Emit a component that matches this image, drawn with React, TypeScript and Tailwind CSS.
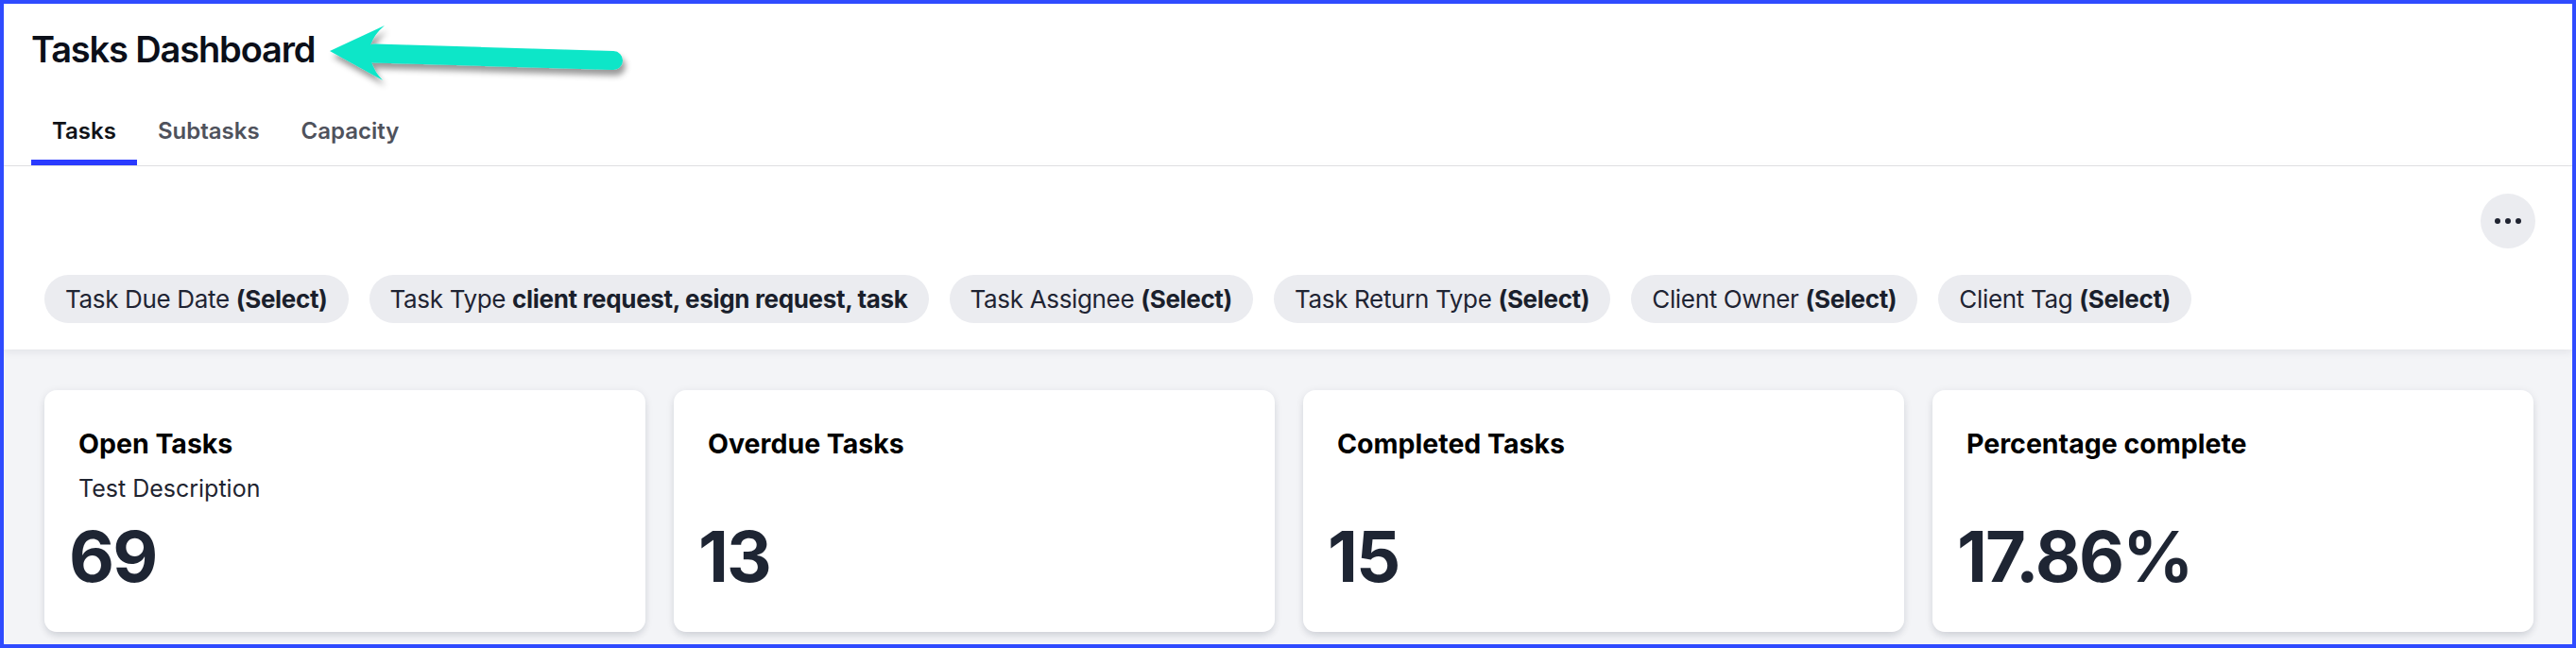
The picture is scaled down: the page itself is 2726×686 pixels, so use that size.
import React from "react";

interface Filter {
  label: string;
  value: string;
}

interface Stat {
  title: string;
  description?: string;
  value: string;
}

const tabs = ["Tasks", "Subtasks", "Capacity"];

const filters: Filter[] = [
  { label: "Task Due Date", value: "(Select)" },
  { label: "Task Type", value: "client request, esign request, task" },
  { label: "Task Assignee", value: "(Select)" },
  { label: "Task Return Type", value: "(Select)" },
  { label: "Client Owner", value: "(Select)" },
  { label: "Client Tag", value: "(Select)" },
];

const stats: Stat[] = [
  { title: "Open Tasks", description: "Test Description", value: "69" },
  { title: "Overdue Tasks", value: "13" },
  { title: "Completed Tasks", value: "15" },
  { title: "Percentage complete", value: "17.86%" },
];

// teal annotation arrow pointing at the page title
const Arrow: React.FC = () => (
  <svg
    className="absolute left-0 top-0 pointer-events-none"
    width="700"
    height="110"
    viewBox="0 0 700 110"
  >
    <defs>
      <filter id="arrowShadow" x="-10%" y="-30%" width="130%" height="180%">
        <feDropShadow dx="3" dy="6" stdDeviation="3" floodColor="#000" floodOpacity="0.4" />
      </filter>
    </defs>
    <g filter="url(#arrowShadow)" fill="#0ee6c8">
      <line x1="392" y1="52.5" x2="645" y2="60" stroke="#0ee6c8" strokeWidth="20" strokeLinecap="round" />
      <path d="M345 50 L403 23 Q392 32 388 44 L389 61 Q392 72 401 81 Z" />
    </g>
  </svg>
);

const App: React.FC = () => {
  return (
    <div className="relative w-full h-[686px] overflow-hidden border-4 border-[#2f4bff] bg-[#f3f4f7] font-['Inter',sans-serif]">
      {/* header - title + tabs */}
      <div className="bg-white border-b border-[#e2e2e4] px-[29px] pt-[25px]">
        <h1 className="text-[38px] leading-[46px] font-semibold tracking-[-0.03em] text-[#0b0f19]">Tasks Dashboard</h1>
        <div className="flex mt-[49px]">
          {tabs.map((tab, i) => (
            <div
              key={tab}
              className={
                i === 0
                  ? "px-[22px] pb-[16px] border-b-[6px] border-[#2b3bff] text-[24px] leading-[29px] font-semibold text-[#111318]"
                  : "px-[22px] pb-[16px] border-b-[6px] border-transparent text-[24px] leading-[29px] font-semibold text-[#4f525c]"
              }
            >
              {tab}
            </div>
          ))}
        </div>
      </div>

      {/* filters */}
      <div className="relative z-10 bg-white pl-[43px] pr-[39px] pt-[29px] pb-[28px] shadow-[0_3px_8px_rgba(30,35,60,0.07)]">
        <div className="flex justify-end">
          <button className="w-[58px] h-[58px] rounded-full bg-[#ebecf0] flex items-center justify-center gap-[5px]">
            <span className="w-[6px] h-[6px] rounded-full bg-[#1f2330]" />
            <span className="w-[6px] h-[6px] rounded-full bg-[#1f2330]" />
            <span className="w-[6px] h-[6px] rounded-full bg-[#1f2330]" />
          </button>
        </div>
        <div className="flex gap-[22px] mt-[28px]">
          {filters.map((f) => (
            <div
              key={f.label}
              className="h-[51px] px-[22px] rounded-full bg-[#ebecf0] flex items-center whitespace-nowrap text-[26px] tracking-[-0.013em] text-[#1f2433]"
            >
              {f.label}&nbsp;<span className="font-bold text-[#1a1f2c]">{f.value}</span>
            </div>
          ))}
        </div>
      </div>

      {/* stat cards */}
      <div className="grid grid-cols-4 gap-[30px] pl-[43px] pr-[41px] pt-[43px]">
        {stats.map((s) => (
          <div
            key={s.title}
            className="h-[256px] bg-white rounded-[13px] px-[36px] pt-[40px] shadow-[0_2px_8px_rgba(20,25,45,0.10),0_6px_10px_-3px_rgba(20,25,45,0.10)]"
          >
            <h3 className="text-[28.5px] leading-[34px] font-bold text-black">{s.title}</h3>
            <p className="mt-[15px] text-[25px] leading-[30px] text-[#1f2430]">{s.description ?? "\u00a0"}</p>
            <div className="mt-[20px] -ml-[10px] text-[74px] leading-[74px] font-bold tracking-[-0.025em] text-[#1e2533]">{s.value}</div>
          </div>
        ))}
      </div>

      <Arrow />
    </div>
  );
};

export default App;
